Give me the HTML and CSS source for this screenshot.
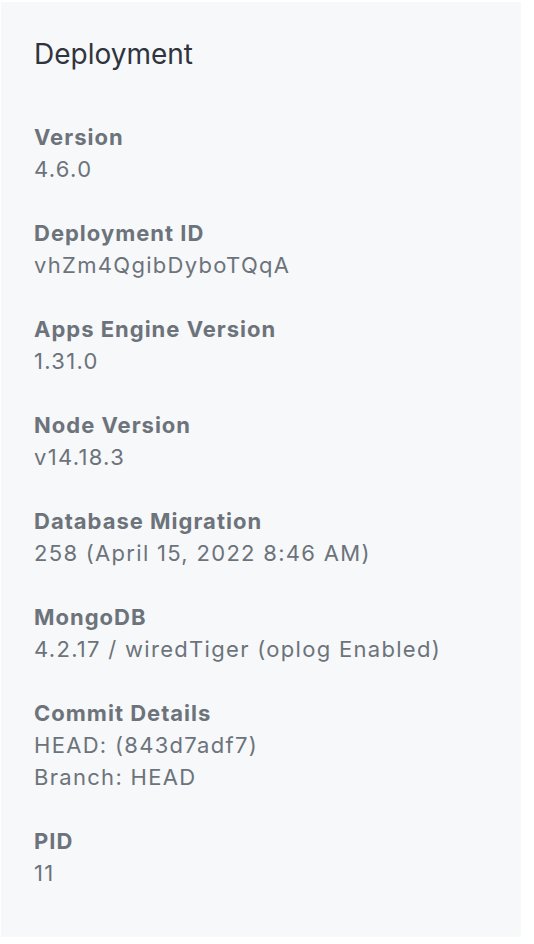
FILE: index.html
```html
<!DOCTYPE html>
<html>
<head>
<meta charset="utf-8">
<link rel="stylesheet" href="styles.css">
</head>
<body>
<div class="card">
  <h2 class="title">Deployment</h2>
  <dl class="list">
    <div class="item"><dt>Version</dt><dd>4.6.0</dd></div>
    <div class="item"><dt>Deployment ID</dt><dd>vhZm4QgibDyboTQqA</dd></div>
    <div class="item"><dt>Apps Engine Version</dt><dd>1.31.0</dd></div>
    <div class="item"><dt>Node Version</dt><dd>v14.18.3</dd></div>
    <div class="item"><dt>Database Migration</dt><dd>258 (April 15, 2022 8:46 AM)</dd></div>
    <div class="item"><dt>MongoDB</dt><dd>4.2.17 / wiredTiger (oplog Enabled)</dd></div>
    <div class="item"><dt>Commit Details</dt><dd>HEAD: (843d7adf7)</dd><dd>Branch: HEAD</dd></div>
    <div class="item"><dt>PID</dt><dd>11</dd></div>
  </dl>
</div>
</body>
</html>
```
FILE: styles.css
```css
html, body {
  margin: 0;
  padding: 0;
  background: #ffffff;
}
body {
  font-family: Inter, "Noto Sans", sans-serif;
}
.card {
  margin: 2px 0 0 1px;
  width: 520px;
  box-sizing: border-box;
  padding: 34px 32px 48px 33px;
  background: #f7f8fa;
}
.title {
  margin: 0 0 49px 0;
  font-size: 28px;
  line-height: 36px;
  font-weight: 400;
  color: #2f343d;
}
.list {
  margin: 0;
  display: flex;
  flex-direction: column;
  gap: 32px;
}
.item dt {
  font-size: 22px;
  line-height: 32px;
  font-weight: 700;
  color: #6c737a;
  letter-spacing: 1px;
}
.item dd {
  margin: 0;
  font-size: 22px;
  line-height: 32px;
  font-weight: 400;
  color: #6c737a;
  letter-spacing: 1.3px;
}
```
